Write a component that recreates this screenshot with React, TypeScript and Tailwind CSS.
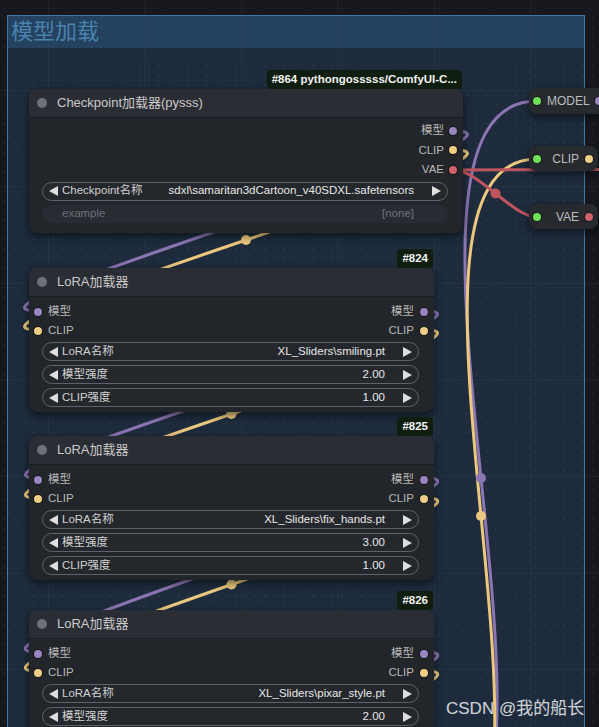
import React from 'react';

type Slot = 'model' | 'clip' | 'vae' | 'green';

const dotColor: Record<Slot, string> = {
  model: 'bg-[#9a86c0]',
  clip: 'bg-[#efcf86]',
  vae: 'bg-[#d0626b]',
  green: 'bg-[#6ee05a]',
};

const Dot = ({ c }: { c: Slot }) => (
  <span className={`block h-[8px] w-[8px] shrink-0 rounded-full ring-1 ring-black/40 ${dotColor[c]}`} />
);

const TriLeft = () => (
  <svg width="9" height="10" viewBox="0 0 9 10" className="shrink-0">
    <path d="M0 5 L9 0 L9 10 Z" fill="#dedede" />
  </svg>
);

const TriRight = () => (
  <svg width="9" height="10" viewBox="0 0 9 10" className="shrink-0">
    <path d="M9 5 L0 0 L0 10 Z" fill="#dedede" />
  </svg>
);

const Widget = ({ label, value }: { label: string; value: string }) => (
  <div className="flex h-[19px] items-center rounded-full border border-[#5f6268] bg-[#24272c] pl-[6px] pr-[6px]">
    <TriLeft />
    <span className="ml-[4px] whitespace-nowrap text-[#d2d2d2]">{label}</span>
    <span className="ml-auto mr-[18px] whitespace-nowrap text-[#e8e8e8]">{value}</span>
    <TriRight />
  </div>
);

interface NodeProps {
  pos: string;
  title: string;
  badge: string;
  children: React.ReactNode;
}

const Node = ({ pos, title, badge, children }: NodeProps) => (
  <div className={`absolute ${pos}`}>
    <div className="absolute bottom-full right-[1px] flex h-[19px] items-center rounded-[4px] bg-[#0f1e0f] px-[5px] text-[11.5px] font-bold text-[#f2f2f2]">
      {badge}
    </div>
    <div className="overflow-hidden rounded-lg bg-[#222529] shadow-[0_3px_8px_rgba(0,0,0,0.55)]">
      <div className="flex h-[29px] items-center border-b border-[#1b1d21] bg-[#2a2d33] pl-[8px]">
        <span className="h-[10px] w-[10px] rounded-full bg-[#6c7079]" />
        <span className="ml-[10px] text-[13px] text-[#cacaca]">{title}</span>
      </div>
      {children}
    </div>
  </div>
);

const OutRow = ({ label, c }: { label: string; c: Slot }) => (
  <div className="flex h-[19.5px] items-center justify-end gap-[5px] pr-[6px] text-[#b8b8b8]">
    <span>{label}</span>
    <Dot c={c} />
  </div>
);

const LoraNode = ({ pos, badge, name, model }: { pos: string; badge: string; name: string; model: string }) => (
  <Node pos={pos} title="LoRA加载器" badge={badge}>
    <div className="flex flex-col pb-[5px] pt-[5px]">
      <div className="flex h-[19px] items-center justify-between pl-[5px] pr-[6px] text-[#b8b8b8]">
        <div className="flex items-center gap-[6px]">
          <Dot c="model" />
          <span>模型</span>
        </div>
        <div className="flex items-center gap-[6px]">
          <span>模型</span>
          <Dot c="model" />
        </div>
      </div>
      <div className="flex h-[19px] items-center justify-between pl-[5px] pr-[6px] text-[#b8b8b8]">
        <div className="flex items-center gap-[6px]">
          <Dot c="clip" />
          <span>CLIP</span>
        </div>
        <div className="flex items-center gap-[6px]">
          <span>CLIP</span>
          <Dot c="clip" />
        </div>
      </div>
      <div className="ml-[13px] mr-[15px] mt-[2px] flex flex-col gap-[4px]">
        <Widget label="LoRA名称" value={name} />
        <Widget label="模型强度" value={model} />
        <Widget label="CLIP强度" value="1.00" />
      </div>
    </div>
  </Node>
);

const links = {
  model: '#8b75b2',
  clip: '#ebc87d',
  vae: '#be555f',
};

const App = () => {
  return (
    <div className="relative h-[727px] w-[599px] overflow-hidden bg-[#16181e] font-['Liberation_Sans','Noto_Sans_CJK_SC',sans-serif] text-[11.5px] [background-image:linear-gradient(to_right,rgba(255,255,255,0.045)_1px,transparent_1px),linear-gradient(to_bottom,rgba(255,255,255,0.045)_1px,transparent_1px),radial-gradient(circle,rgba(255,255,255,0.06)_1px,transparent_1.4px)] [background-position:48px_90px,48px_90px,48px_90px] [background-size:96.5px_96.5px,96.5px_96.5px,9.65px_9.65px]">
      {/* group */}
      <div className="absolute left-[7px] top-[15px] h-[760px] w-[578px] border border-[#3d78a8] bg-[#3a7ab8]/20">
        <div className="flex h-[32px] items-center bg-[#3a7ab8]/28 pl-[3px] text-[22px] leading-none text-[#4a81ae]">
          模型加载
        </div>
      </div>

      {/* links */}
      <svg className="absolute left-0 top-0" width="599" height="727" viewBox="0 0 599 727" fill="none">
        <path d="M454 131 C567 131 -75 311 38 311" stroke={links.model} strokeWidth="3" />
        <path d="M454 150 C567 150 -75 330 38 330" stroke={links.clip} strokeWidth="3" />
        <path d="M425 311 C530 311 -67 478 38 478" stroke={links.model} strokeWidth="3" />
        <path d="M425 330 C530 330 -67 498 38 498" stroke={links.clip} strokeWidth="3" />
        <path d="M425 478 C531 478 -68 652 38 652" stroke={links.model} strokeWidth="3" />
        <path d="M425 498 C531 498 -68 671 38 671" stroke={links.clip} strokeWidth="3" />
        <path d="M425 652 C531 652 -68 826 38 826" stroke={links.model} strokeWidth="3" />
        <path d="M425 671 C531 671 -68 845 38 845" stroke={links.clip} strokeWidth="3" />
        <path d="M425 855 C615 855 347 101 537 101" stroke={links.model} strokeWidth="3" />
        <path d="M425 873 C606 873 356 159 537 159" stroke={links.clip} strokeWidth="3" />
        <path d="M454 170 C478 170 513 217 537 217" stroke={links.vae} strokeWidth="3" />
        <path d="M454 170 C650 170 900 168 1100 168" stroke={links.vae} strokeWidth="3" />
        <circle cx="246" cy="240" r="5" fill={links.clip} />
        <circle cx="231.5" cy="414" r="5" fill={links.clip} />
        <circle cx="231.5" cy="584.5" r="5" fill={links.clip} />
        <circle cx="481" cy="478" r="5" fill={links.model} />
        <circle cx="481" cy="516" r="5" fill={links.clip} />
        <circle cx="495.5" cy="193.5" r="5" fill={links.vae} />
      </svg>

      {/* checkpoint loader */}
      <Node pos="left-[29px] top-[89px] w-[434px]" title="Checkpoint加载器(pysss)" badge="#864 pythongosssss/ComfyUI-C...">
        <div className="flex flex-col pb-[10px] pt-[3px]">
          <OutRow label="模型" c="model" />
          <OutRow label="CLIP" c="clip" />
          <OutRow label="VAE" c="vae" />
          <div className="ml-[13px] mr-[15px] mt-[2px]">
            <Widget label="Checkpoint名称" value="sdxl\samaritan3dCartoon_v40SDXL.safetensors" />
          </div>
          <div className="ml-[13px] mr-[15px] mt-[4px] flex h-[18px] items-center justify-between rounded-full bg-[#282b31] pl-[20px] pr-[34px] text-[#6f7278]">
            <span>example</span>
            <span>[none]</span>
          </div>
        </div>
      </Node>

      <LoraNode pos="left-[29px] top-[268px] w-[405px]" badge="#824" name="XL_Sliders\smiling.pt" model="2.00" />
      <LoraNode pos="left-[29px] top-[436px] w-[405px]" badge="#825" name="XL_Sliders\fix_hands.pt" model="3.00" />
      <LoraNode pos="left-[29px] top-[610px] w-[405px]" badge="#826" name="XL_Sliders\pixar_style.pt" model="2.00" />

      {/* reroute nodes on the right */}
      <div className="absolute left-[529px] top-[88px] flex h-[26px] w-[78px] items-center rounded-lg bg-[#26292e] pl-[4px] text-[12px] text-[#bdbdbd] shadow-[0_3px_8px_rgba(0,0,0,0.55)]">
        <Dot c="green" />
        <span className="ml-[6px]">MODEL</span>
        <span className="ml-[5px]">
          <Dot c="model" />
        </span>
      </div>
      <div className="absolute left-[529px] top-[146px] flex h-[25px] w-[69px] items-center justify-between rounded-lg bg-[#26292e] pl-[4px] pr-[5px] text-[12px] text-[#bdbdbd] shadow-[0_3px_8px_rgba(0,0,0,0.55)]">
        <Dot c="green" />
        <div className="flex items-center gap-[6px]">
          <span>CLIP</span>
          <Dot c="clip" />
        </div>
      </div>
      <div className="absolute left-[529px] top-[204px] flex h-[25px] w-[69px] items-center justify-between rounded-lg bg-[#26292e] pl-[4px] pr-[5px] text-[12px] text-[#bdbdbd] shadow-[0_3px_8px_rgba(0,0,0,0.55)]">
        <Dot c="green" />
        <div className="flex items-center gap-[6px]">
          <span>VAE</span>
          <Dot c="vae" />
        </div>
      </div>

      {/* watermark */}
      <div className="absolute left-[446px] top-[696px] whitespace-nowrap text-[17px] text-white/80">CSDN @我的船长</div>
    </div>
  );
};

export default App;
